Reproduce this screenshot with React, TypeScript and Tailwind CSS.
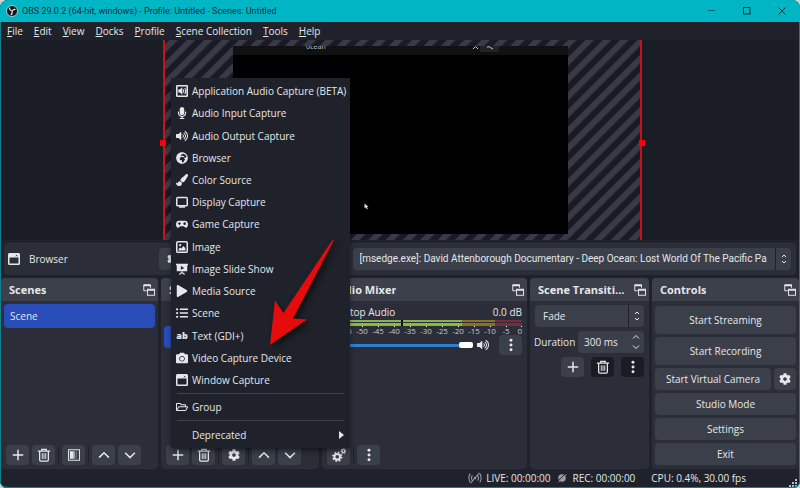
import type { ReactNode } from "react";
import {
  FaCamera,
  FaCog,
  FaGlobeAfrica,
  FaListUl,
  FaMicrophone,
  FaPaintBrush,
  FaPlay,
  FaRegFolderOpen,
  FaVolumeUp,
} from "react-icons/fa";

interface IconProps {
  className?: string;
}

interface SvgProps extends IconProps {
  children: ReactNode;
}

function Svg({ className = "size-3", children }: SvgProps) {
  return (
    <svg
      viewBox="0 0 16 16"
      className={className}
      fill="none"
      stroke="currentColor"
      strokeWidth="2"
      aria-hidden="true"
    >
      {children}
    </svg>
  );
}

const AppAudioIcon = () => (
  <Svg>
    <rect x="1" y="1" width="14" height="14" rx="1" strokeWidth="2.2" />
    <path d="M3 6h2l3.500-3v10L5 10H3z" fill="currentColor" stroke="none" />
    <path d="M9.700 5.800q1.600 2.200 0 4.400M11.500 4q3 4 0 8" strokeWidth="1.400" />
  </Svg>
);

const DisplayIcon = () => (
  <Svg>
    <rect x="1" y="2" width="14" height="11" rx="1.5" />
    <path d="M4 14.500h8" />
  </Svg>
);

const GameIcon = () => (
  <Svg>
    <path
      d="M4 3.500h8c2.600 0 4 2.300 4 4.800S14.800 13 13.400 13c-1.500 0-2.400-2-3.400-2H6c-1 0-1.900 2-3.400 2S0 10.800 0 8.300s1.400-4.800 4-4.800z"
      fill="currentColor"
      stroke="none"
    />
    <path d="M4.500 5.500v4M2.500 7.500h4" stroke="#1f222a" strokeWidth="1.300" />
    <circle cx="11.500" cy="7.500" r="1.700" fill="#1f222a" stroke="none" />
  </Svg>
);

const ImageIcon = () => (
  <Svg>
    <rect x="1" y="1" width="14" height="14" rx="1.5" />
    <circle cx="5.500" cy="5.500" r="1.500" fill="currentColor" stroke="none" />
    <path d="M3.500 12.500v-2l2-2 1.500 1.500 3-3.500 2.500 3v3z" fill="currentColor" stroke="none" />
  </Svg>
);

const SlideShowIcon = () => (
  <Svg>
    <path d="M0 1h16v2h-1v8H1V3H0z" fill="currentColor" stroke="none" />
    <path d="M8 11v3M4.500 15.200L8 12.500l3.500 2.700" strokeWidth="1.600" />
    <path d="M6.500 4v5L11 6.500z" fill="#1f222a" stroke="none" />
  </Svg>
);

const WindowIcon = ({ className }: IconProps) => (
  <Svg className={className}>
    <rect x="1" y="1" width="14" height="14" rx="1" />
    <path d="M1 1h14v5H1z" fill="currentColor" stroke="none" />
    <path d="M10.500 2.500l2 2M12.500 2.500l-2 2" stroke="#1f222a" strokeWidth="0.900" />
  </Svg>
);

const TextIcon = () => (
  <span className="w-3 text-center text-[9px] leading-3 font-extrabold">ab</span>
);

const PlusIcon = () => (
  <Svg className="size-3">
    <path d="M8 1v14M1 8h14" />
  </Svg>
);

const TrashIcon = () => (
  <Svg className="size-3.5">
    <path d="M1 3.500h14M5.500 3V1.500h5V3M3 4v9.500q0 1.500 1.500 1.500h7q1.500 0 1.500-1.500V4" strokeWidth="1.500" />
    <path d="M6 6v6.500M8 6v6.500M10 6v6.500" strokeWidth="1.100" />
  </Svg>
);

const FilterIcon = () => (
  <Svg className="size-3">
    <rect x="0.700" y="1" width="14.600" height="14" strokeWidth="1.300" />
    <path d="M2.500 3h5v10h-5z" fill="currentColor" stroke="none" />
    <path d="M8.500 3v10" strokeWidth="1.600" opacity="0.600" />
    <path d="M11 3v10" strokeWidth="1.600" opacity="0.300" />
  </Svg>
);

const UpIcon = () => (
  <Svg className="size-3">
    <path d="M1.500 11.500L8 5l6.500 6.500" />
  </Svg>
);

const DownIcon = () => (
  <Svg className="size-3">
    <path d="M1.500 5L8 11.500 14.500 5" />
  </Svg>
);

const DotsIcon = () => (
  <Svg className="size-3.5">
    <g fill="currentColor" stroke="none">
      <circle cx="8" cy="2.500" r="1.700" />
      <circle cx="8" cy="8" r="1.700" />
      <circle cx="8" cy="13.500" r="1.700" />
    </g>
  </Svg>
);

const GearsIcon = () => (
  <Svg className="size-3.5">
    <circle cx="6" cy="10" r="3.200" strokeWidth="2.200" />
    <circle cx="6" cy="10" r="4.900" strokeWidth="2" strokeDasharray="2 1.850" />
    <circle cx="13" cy="3.500" r="1.700" strokeWidth="1.500" />
    <circle cx="13" cy="3.500" r="2.600" strokeWidth="1.200" strokeDasharray="1.200 0.840" />
  </Svg>
);

const FloatIcon = () => (
  <Svg className="size-3">
    <path d="M5 9H1V1h9v4" strokeWidth="1.300" />
    <path d="M1 2h9" />
    <rect x="6" y="7" width="9.300" height="8" strokeWidth="1.300" />
    <path d="M6 8h9" />
  </Svg>
);

const SpinIcon = () => (
  <svg viewBox="0 0 6 10" className="h-2.5 w-1.5" fill="none" stroke="currentColor" aria-hidden="true">
    <path d="M1 3l2-2 2 2M1 7l2 2 2-2" />
  </svg>
);

const ObsLogo = () => (
  <svg viewBox="0 0 24 24" className="size-3" aria-hidden="true">
    <circle cx="12" cy="12" r="11" fill="#16161c" stroke="#d8e4e6" strokeWidth="1.500" />
    <g fill="none" stroke="#e8eef0" strokeWidth="2.500">
      <path d="M7 5a5 5 0 0 0 4.500 6" />
      <path d="M19 9a5 5 0 0 0-6.500 4" />
      <path d="M9.500 19.500a5 5 0 0 0 2-7" />
    </g>
  </svg>
);

const MENUS = ["File", "Edit", "View", "Docks", "Profile", "Scene Collection", "Tools", "Help"];

const SOURCE_TYPES = [
  { label: "Application Audio Capture (BETA)", icon: <AppAudioIcon /> },
  { label: "Audio Input Capture", icon: <FaMicrophone className="size-3" /> },
  { label: "Audio Output Capture", icon: <FaVolumeUp className="size-3" /> },
  { label: "Browser", icon: <FaGlobeAfrica className="size-3" /> },
  { label: "Color Source", icon: <FaPaintBrush className="size-3" /> },
  { label: "Display Capture", icon: <DisplayIcon /> },
  { label: "Game Capture", icon: <GameIcon /> },
  { label: "Image", icon: <ImageIcon /> },
  { label: "Image Slide Show", icon: <SlideShowIcon /> },
  { label: "Media Source", icon: <FaPlay className="size-3" /> },
  { label: "Scene", icon: <FaListUl className="size-3" /> },
  { label: "Text (GDI+)", icon: <TextIcon /> },
  { label: "Video Capture Device", icon: <FaCamera className="size-3" /> },
  { label: "Window Capture", icon: <WindowIcon /> },
];

const DB_MARKS = ["-60", "-55", "-50", "-45", "-40", "-35", "-30", "-25", "-20", "-15", "-10", "-5", "0"];

interface ToolButtonProps {
  label: string;
  dark?: boolean;
  children: ReactNode;
}

function ToolButton({ label, dark, children }: ToolButtonProps) {
  return (
    <button
      type="button"
      aria-label={label}
      className={`flex h-5 w-[23px] shrink-0 items-center justify-center rounded-sm ${
        dark ? "bg-[#191b25]" : "bg-[#3b3f4a]"
      }`}
    >
      {children}
    </button>
  );
}

const Divider = () => <span className="h-4 w-px bg-[#20222b]" />;

interface DockProps {
  title: string;
  children: ReactNode;
}

function Dock({ title, children }: DockProps) {
  return (
    <section className="flex min-w-0 flex-col overflow-hidden rounded-sm bg-[#2b2e39]">
      <header className="flex h-[23px] shrink-0 items-center justify-between bg-[#3c404b] pr-[3px] pl-2">
        <h2 className="truncate text-[11px] font-bold">{title}</h2>
        <button type="button" aria-label={`Float ${title}`}>
          <FloatIcon />
        </button>
      </header>
      {children}
    </section>
  );
}

function TitleBar() {
  return (
    <header className="flex h-[22px] items-center bg-[#00b6c5] pr-3.5 pl-1.5 font-[Roboto,sans-serif] text-[9px] text-[#0b2f3a]">
      <ObsLogo />
      <h1 className="ml-1 flex-1">OBS 29.0.2 (64-bit, windows) - Profile: Untitled - Scenes: Untitled</h1>
      <div className="flex gap-[27px]">
        <button type="button" aria-label="Minimize">
          <svg viewBox="0 0 8 8" className="size-2" stroke="currentColor">
            <path d="M0 3.500h7" opacity="0.600" />
          </svg>
        </button>
        <button type="button" aria-label="Maximize">
          <svg viewBox="0 0 8 8" className="size-2" fill="none" stroke="currentColor">
            <rect x="0.500" y="0.500" width="6.500" height="6.500" />
          </svg>
        </button>
        <button type="button" aria-label="Close">
          <svg viewBox="0 0 8 8" className="size-2" stroke="currentColor">
            <path d="M0.500 0.500l7 7M7.500 0.500l-7 7" />
          </svg>
        </button>
      </div>
    </header>
  );
}

function Preview() {
  return (
    <main className="flex h-[200px] justify-center bg-[#1a1c26] pl-[5px]">
      <div className="relative flex w-[60.4%] border-x-2 border-[#c8121a]">
        <svg className="absolute inset-0 size-full" aria-hidden="true">
          <defs>
            <pattern
              id="stripes"
              width="12.256"
              height="12.256"
              patternUnits="userSpaceOnUse"
              patternTransform="rotate(45) translate(3.2 0)"
            >
              <rect width="12.256" height="12.256" fill="#181a25" />
              <rect width="6" height="12.256" fill="#393a45" />
            </pattern>
          </defs>
          <rect width="100%" height="100%" fill="url(#stripes)" />
        </svg>
        <div className="relative mt-1.5 mr-[72px] mb-1.5 ml-[68px] flex-1 overflow-hidden bg-black">
          <div className="flex h-[9px] items-start bg-[#111113] text-[#c9c9cc]">
            <span className="ml-[73px] flex-1 text-[7px] leading-[2px]">ocean</span>
            <svg viewBox="0 0 40 6" className="mr-[60px] h-1.5 w-10" fill="none" stroke="currentColor">
              <path d="M12 0h20l-2 6H12z" fill="#232326" stroke="none" />
              <path d="M5 3l2.500-2.500L10 3M19 1q3-1 4 1l2 1" />
            </svg>
          </div>
          <svg viewBox="0 0 6 8" className="absolute top-[157px] left-[131px] h-2 w-1.5" fill="#e8e8e8">
            <path d="M0.500 0.500v5l1.400-1.200 1 2 .9-.5-.9-1.800h1.600z" />
          </svg>
        </div>
        <span className="absolute top-[100px] -left-[5px] size-1.5 bg-[#fb0007]" />
        <span className="absolute top-[100px] -right-[5px] size-1.5 bg-[#fb0007]" />
      </div>
    </main>
  );
}

function SourceToolbar() {
  return (
    <div className="mx-[3px] mt-[3px] flex h-8 items-center rounded-sm bg-[#2b2e39] pr-[5px] pl-1">
      <WindowIcon className="size-3" />
      <span className="ml-[9px] w-[130px]">Browser</span>
      <button
        type="button"
        aria-label="Properties"
        className="flex h-[22px] w-24 items-center rounded-sm bg-[#3b3f4a] pl-2"
      >
        <FaCog className="size-3" />
      </button>
      <span className="flex-1" />
      <div className="flex h-[22px] w-[56%] items-stretch rounded-sm bg-[#3b3f4a]">
        <select
          aria-label="Window"
          className="min-w-0 flex-1 appearance-none pl-[7px] font-[Roboto,sans-serif]"
        >
          <option>
            [msedge.exe]: David Attenborough Documentary - Deep Ocean: Lost World Of The Pacific Pa
          </option>
        </select>
        <span className="flex w-4 items-center justify-center border-l border-[#20222b]">
          <SpinIcon />
        </span>
      </div>
    </div>
  );
}

function ScenesDock() {
  return (
    <Dock title="Scenes">
      <div className="flex-1 p-[3px]">
        <button type="button" className="h-6 w-full rounded-sm bg-[#284cb8] px-1.5 text-left">
          Scene
        </button>
      </div>
      <div className="flex items-center gap-[3px] px-[5px] pb-1">
        <ToolButton label="Add scene"><PlusIcon /></ToolButton>
        <ToolButton label="Remove scene"><TrashIcon /></ToolButton>
        <Divider />
        <ToolButton label="Scene filters"><FilterIcon /></ToolButton>
        <Divider />
        <ToolButton label="Move scene up"><UpIcon /></ToolButton>
        <ToolButton label="Move scene down"><DownIcon /></ToolButton>
      </div>
    </Dock>
  );
}

function SourcesDock() {
  return (
    <Dock title="Sources">
      <div className="flex-1 px-[3px] pt-[25px]">
        <button
          type="button"
          aria-label="Selected source"
          className="h-[22px] w-full rounded-sm bg-[#284cb8]"
        />
      </div>
      <div className="flex items-center gap-[3px] px-[5px] pb-1">
        <ToolButton label="Add source"><PlusIcon /></ToolButton>
        <ToolButton label="Remove source"><TrashIcon /></ToolButton>
        <Divider />
        <ToolButton label="Source properties"><FaCog className="size-3" /></ToolButton>
        <Divider />
        <ToolButton label="Move source up"><UpIcon /></ToolButton>
        <ToolButton label="Move source down"><DownIcon /></ToolButton>
      </div>
    </Dock>
  );
}

function MeterBar({ className }: IconProps) {
  return (
    <div className={`flex ${className}`}>
      <span className="w-[38%] bg-current" />
      <span className="w-0.5 bg-black" />
      <span className="flex-1 bg-current" />
      <span className="w-[17%] bg-[#8a7221]" />
      <span className="w-[14%] bg-[#7b2c3b]" />
    </div>
  );
}

function MixerDock() {
  return (
    <Dock title="Audio Mixer">
      <div className="flex-1 px-[5px] pt-1">
        <div className="flex justify-between">
          <span>Desktop Audio</span>
          <span>0.0 dB</span>
        </div>
        <MeterBar className="mt-px h-0.5 text-[#8fae5a]" />
        <MeterBar className="mt-px h-[3px] text-[#80c12f]" />
        <div className="flex justify-between pl-[3px] text-[8px] leading-2 text-[#c5c8d0]">
          {DB_MARKS.map((mark) => (
            <span key={mark} className="flex w-0 flex-col items-center last:items-end">
              <span className="h-px w-px bg-white" />
              {mark}
            </span>
          ))}
        </div>
        <div className="flex items-center">
          <input
            type="range"
            aria-label="Desktop Audio volume"
            defaultValue={100}
            className="h-1.5 min-w-0 flex-1 appearance-none bg-[linear-gradient(#2f7fd0,#2f7fd0)] bg-[length:100%_3px] bg-center bg-no-repeat [&::-webkit-slider-thumb]:h-1.5 [&::-webkit-slider-thumb]:w-3.5 [&::-webkit-slider-thumb]:appearance-none [&::-webkit-slider-thumb]:rounded-xs [&::-webkit-slider-thumb]:bg-white"
          />
          <FaVolumeUp className="mr-2.5 ml-1 size-3" />
          <ToolButton label="Desktop Audio options"><DotsIcon /></ToolButton>
        </div>
      </div>
      <div className="flex items-center gap-[3px] px-[5px] pb-1">
        <ToolButton label="Advanced audio properties"><GearsIcon /></ToolButton>
        <Divider />
        <ToolButton label="Mixer menu"><DotsIcon /></ToolButton>
      </div>
    </Dock>
  );
}

function TransitionsDock() {
  return (
    <Dock title="Scene Transiti...">
      <div className="flex flex-col gap-1 px-[5px] pt-1">
        <div className="flex h-[22px] rounded-sm bg-[#3b3f4a]">
          <select aria-label="Transition" className="min-w-0 flex-1 appearance-none pl-2">
            <option>Fade</option>
          </select>
          <span className="flex w-4 items-center justify-center border-l border-[#20222b]">
            <SpinIcon />
          </span>
        </div>
        <div className="-ml-px flex items-center justify-between">
          <label htmlFor="duration">Duration</label>
          <div className="flex h-[22px] w-[66px] items-center rounded-sm bg-[#3b3f4a] pr-1 pl-1.5">
            <input id="duration" defaultValue="300 ms" className="w-full min-w-0 flex-1" />
            <svg viewBox="0 0 8 14" className="h-3.5 w-2" fill="none" stroke="currentColor" aria-hidden="true">
              <path d="M1 3.500l3-3 3 3M1 10.500l3 3 3-3" />
            </svg>
          </div>
        </div>
        <div className="flex justify-end gap-[7px]">
          <ToolButton label="Add transition"><PlusIcon /></ToolButton>
          <ToolButton label="Remove transition" dark><TrashIcon /></ToolButton>
          <ToolButton label="Transition properties" dark><DotsIcon /></ToolButton>
        </div>
      </div>
    </Dock>
  );
}

function ControlsDock() {
  return (
    <Dock title="Controls">
      <div className="flex flex-col gap-[3px] px-[3px] pt-[5px] pb-1">
        <button type="button" className="h-7 rounded-sm bg-[#3b3f4a]">Start Streaming</button>
        <button type="button" className="h-7 rounded-sm bg-[#3b3f4a]">Start Recording</button>
        <div className="flex gap-[3px]">
          <button type="button" className="h-[22px] flex-1 rounded-sm bg-[#3b3f4a]">
            Start Virtual Camera
          </button>
          <button
            type="button"
            aria-label="Configure virtual camera"
            className="flex w-[22px] items-center justify-center rounded-sm bg-[#3b3f4a]"
          >
            <FaCog className="size-3" />
          </button>
        </div>
        <button type="button" className="h-[22px] rounded-sm bg-[#3b3f4a]">Studio Mode</button>
        <button type="button" className="h-[22px] rounded-sm bg-[#3b3f4a]">Settings</button>
        <button type="button" className="h-[22px] rounded-sm bg-[#3b3f4a]">Exit</button>
      </div>
    </Dock>
  );
}

function StatusBar() {
  return (
    <footer className="flex h-[18px] items-center justify-end pr-0.5">
      <Svg className="mr-1 size-3.5 text-[#9a9ca5]">
        <circle cx="8" cy="8" r="1.500" fill="currentColor" stroke="none" />
        <path d="M5 5q-2 3 0 6M11 5q2 3 0 6M2.500 3q-3 5 0 10M13.500 3q3 5 0 10M3 14L13 2" strokeWidth="1.200" />
      </Svg>
      <span>LIVE: 00:00:00</span>
      <Svg className="mx-1.5 size-2.5 text-[#9a9ca5]">
        <circle cx="8" cy="8" r="6" fill="currentColor" stroke="none" />
        <path d="M1 13.500L13 1.500" stroke="#1f222a" strokeWidth="1.500" />
        <path d="M2 15L15 2" strokeWidth="1.500" />
      </Svg>
      <span>REC: 00:00:00</span>
      <span className="ml-4">CPU: 0.4%, 30.00 fps</span>
      <svg viewBox="0 0 8 8" className="ml-[43px] size-2 self-end" fill="#b9bbc2" aria-hidden="true">
        <path d="M6 0h2v2H6zM3 3h2v2H3zM6 3h2v2H6zM0 6h2v2H0zM3 6h2v2H3zM6 6h2v2H6z" />
      </svg>
    </footer>
  );
}

function AddSourceMenu() {
  return (
    <div
      role="menu"
      className="absolute top-[78px] left-[171px] w-[179px] bg-[#1f222a] pt-0.5 shadow-md shadow-black/40"
    >
      <div className="flex h-[311px] flex-col">
        {SOURCE_TYPES.map(({ label, icon }) => (
          <button
            key={label}
            type="button"
            role="menuitem"
            className="flex flex-1 items-center gap-1 pl-[5px] text-left whitespace-nowrap"
          >
            {icon}
            {label}
          </button>
        ))}
      </div>
      <hr className="mx-1.5 mt-0.5 border-[#3c404b]" />
      <button type="button" role="menuitem" className="flex h-[26px] w-full items-center gap-1 pl-[5px]">
        <FaRegFolderOpen className="size-3" />
        Group
      </button>
      <hr className="mx-1.5 border-[#3c404b]" />
      <button
        type="button"
        role="menuitem"
        className="flex h-[27px] w-full items-center justify-between pr-1.5 pl-[21px]"
      >
        Deprecated
        <svg viewBox="0 0 5 8" className="h-2 w-[5px]" fill="currentColor" aria-hidden="true">
          <path d="M0 0l5 4-5 4z" />
        </svg>
      </button>
    </div>
  );
}

function Pointer() {
  return (
    <svg
      viewBox="0 0 66 108"
      className="pointer-events-none absolute top-[239px] left-[269px] h-[108px] w-[66px] drop-shadow-[3px_3px_3px_rgba(0,0,0,0.6)]"
      aria-hidden="true"
    >
      <path d="M1 106L6 61.500 14.500 74 63 1.500 65 1 24 79.500 38 80.500z" fill="#e60c0c" />
    </svg>
  );
}

export default function App() {
  return (
    <div className="min-h-screen bg-[#c9d6d8]">
      <div className="relative flex min-h-screen flex-col overflow-hidden rounded-lg border-b-2 border-[#10808c] bg-[#1f222a] font-['Open_Sans','Noto_Sans',sans-serif] text-[10px] leading-[14px] text-[#e6e7ea]">
        <TitleBar />
        <div className="flex flex-1 flex-col border-x border-[#10808c]">
          <nav className="flex h-[18px] items-center gap-[11px] pl-1.5">
            {MENUS.map((menu) => (
              <button key={menu} type="button">
                <u>{menu[0]}</u>
                {menu.slice(1)}
              </button>
            ))}
          </nav>
          <Preview />
          <SourceToolbar />
          <div className="mt-[3px] grid flex-1 grid-cols-[157fr_158fr_205fr_119fr_147fr] gap-[3px]">
            <ScenesDock />
            <SourcesDock />
            <MixerDock />
            <TransitionsDock />
            <ControlsDock />
          </div>
          <StatusBar />
        </div>
        <AddSourceMenu />
        <Pointer />
      </div>
    </div>
  );
}
